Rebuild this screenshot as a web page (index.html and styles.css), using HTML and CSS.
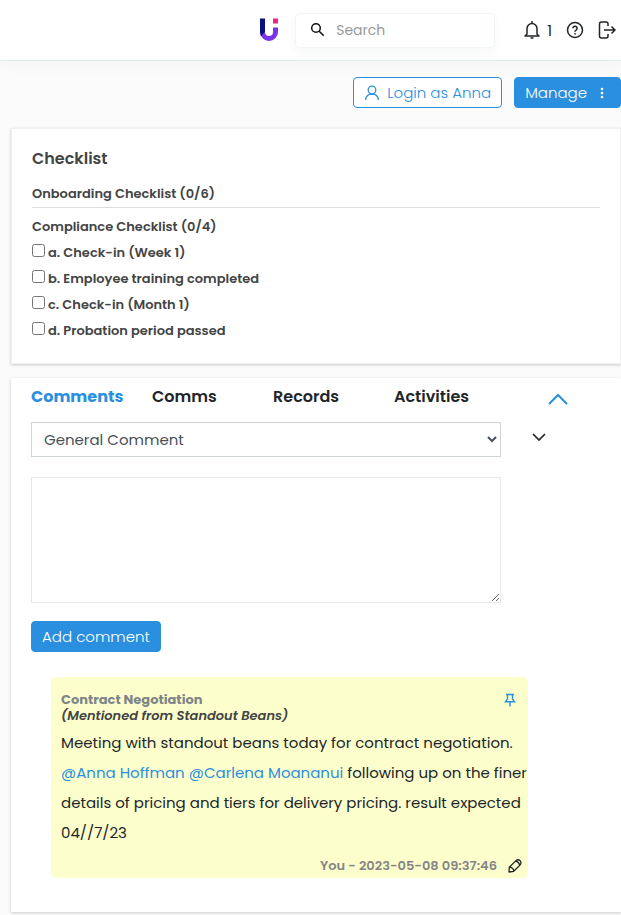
FILE: index.html
```html
<!DOCTYPE html>
<html lang="en">
<head>
  <meta charset="UTF-8">
  <meta name="viewport" content="width=device-width, initial-scale=1">
  <title>Employee</title>
  <link rel="stylesheet" href="styles.css">
</head>
<body>

  <header class="topbar">
    <a class="logo" href="#" aria-label="Home">
      <svg width="20" height="24" viewBox="0 0 20 24">
        <path d="M3.500 14a6.500 6.500 0 0 0 13 0V9.500" fill="none" stroke="#7a33e6" stroke-width="5"/>
        <path d="M1 .5h5v13L2 18.500L1 14z" fill="#0b0f80"/>
        <rect x="14" y=".5" width="5" height="5" fill="#ec2484"/>
      </svg>
    </a>
    <form class="search">
      <svg width="16" height="16" viewBox="0 0 16 16" fill="none" stroke="#111" stroke-width="1.500">
        <circle cx="6" cy="6" r="4.300"/>
        <path d="M9.200 9.200L13.700 13.700"/>
      </svg>
      <input type="search" placeholder="Search" aria-label="Search">
    </form>
    <nav class="top-icons">
      <a class="bell" href="#" aria-label="Notifications">
        <svg width="18" height="20" viewBox="0 0 18 20" fill="none" stroke="currentColor" stroke-width="1.500">
          <path d="M9 1v2M4 14V8.500a5 5 0 0 1 10 0V14l2 2H2z" stroke-linejoin="round"/>
          <path d="M7.500 18h3"/>
        </svg>
        <span>1</span>
      </a>
      <a href="#" aria-label="Help">
        <svg width="18" height="18" viewBox="0 0 18 18" fill="none" stroke="currentColor" stroke-width="1.500">
          <circle cx="9" cy="9" r="7.500"/>
          <path d="M6.900 7.300a2.100 2.100 0 1 1 3.200 1.800c-.8.5-1.100.8-1.100 1.600M9 12v1.500"/>
        </svg>
      </a>
      <a href="#" aria-label="Log out">
        <svg width="18" height="18" viewBox="0 0 18 18" fill="none" stroke="currentColor" stroke-width="1.500">
          <path d="M10 5V3q0-2-2-2H3.500q-2 0-2 2v12q0 2 2 2H8q2 0 2-2v-2M6 9h11M13.500 5.500L17 9l-3.500 3.500"/>
        </svg>
      </a>
    </nav>
  </header>

  <div class="actions">
    <button class="btn btn-outline" type="button">
      <svg width="16" height="16" viewBox="0 0 16 16" fill="none" stroke="currentColor" stroke-width="1.300">
        <circle cx="8" cy="5" r="3.800"/>
        <path d="M1.500 15c.5-3.700 3-6 6.500-6s6 2.300 6.500 6"/>
      </svg>
      Login as Anna
    </button>
    <button class="btn btn-manage" type="button">
      Manage
      <svg width="4" height="12" viewBox="0 0 4 12" fill="currentColor">
        <circle cx="2" cy="2" r="1.300"/><circle cx="2" cy="6" r="1.300"/><circle cx="2" cy="10" r="1.300"/>
      </svg>
    </button>
  </div>

  <main>
    <section class="card checklist">
      <h2>Checklist</h2>
      <h3 class="group">Onboarding Checklist (0/6)</h3>
      <h3>Compliance Checklist (0/4)</h3>
      <ul>
        <li><input type="checkbox" id="check-a"><label for="check-a">a. Check-in (Week 1)</label></li>
        <li><input type="checkbox" id="check-b"><label for="check-b">b. Employee training completed</label></li>
        <li><input type="checkbox" id="check-c"><label for="check-c">c. Check-in (Month 1)</label></li>
        <li><input type="checkbox" id="check-d"><label for="check-d">d. Probation period passed</label></li>
      </ul>
    </section>

    <section class="card comments">
      <nav class="tabs">
        <a class="active" href="#">Comments</a>
        <a href="#">Comms</a>
        <a href="#">Records</a>
        <a href="#">Activities</a>
        <button class="icon-btn collapse" type="button" aria-label="Collapse">
          <svg width="20" height="12" viewBox="0 0 20 12" fill="none" stroke="currentColor" stroke-width="2">
            <path d="M1 11l9-9 9 9"/>
          </svg>
        </button>
      </nav>

      <form class="comment-form">
        <select aria-label="Comment type">
          <option>General Comment</option>
        </select>
        <button class="icon-btn expand" type="button" aria-label="More options">
          <svg width="14" height="8" viewBox="0 0 14 8" fill="none" stroke="currentColor" stroke-width="1.700">
            <path d="M1 1l6 6 6-6"/>
          </svg>
        </button>
        <textarea aria-label="Comment"></textarea>
        <button class="btn btn-add" type="button">Add comment</button>
      </form>

      <article class="note">
        <div class="note-head">
          <div>
            <h4>Contract Negotiation</h4>
            <em>(Mentioned from Standout Beans)</em>
          </div>
          <button class="icon-btn pin" type="button" aria-label="Pin">
            <svg width="12" height="14" viewBox="0 0 12 14" fill="none" stroke="currentColor" stroke-width="1.400">
              <path d="M2 1.500h8M3.500 1.500v4.500L1.500 8.700h9l-2-2.700v-4.500M6 9v4.500"/>
            </svg>
          </button>
        </div>
        <p>Meeting with standout beans today for contract negotiation. <a href="#">@Anna Hoffman</a> <a href="#">@Carlena Moananui</a> following up on the finer details of pricing and tiers for delivery pricing. result expected 04//7/23</p>
        <footer>
          <span>You - 2023-05-08 09:37:46</span>
          <button class="icon-btn edit" type="button" aria-label="Edit">
            <svg width="14" height="14" viewBox="0 0 14 14" fill="none" stroke="currentColor" stroke-width="1.300" stroke-linejoin="round">
              <path d="M1 13l.3-4.700L8 1.600q2.200-1.600 3.900-.2t.6 4.200L5.700 12.300zM1.800 8.200q3.400.5 4 4M7.800 2.200q3 .8 4 4"/>
            </svg>
          </button>
        </footer>
      </article>
    </section>
  </main>

</body>
</html>
```
FILE: styles.css
```css
* {
  box-sizing: border-box;
}
body {
  margin: 0;
  background: #fbfbfb;
  color: #212529;
  font-family: Poppins, Inter, "Liberation Sans", sans-serif;
  font-size: 15px;
}
h2, h3, h4, p, ul {
  margin: 0;
  padding: 0;
}
a {
  color: inherit;
  text-decoration: none;
}
svg {
  display: block;
  flex: none;
}
button, input, select, textarea {
  font: inherit;
}

/* top bar */
.topbar {
  display: flex;
  align-items: center;
  justify-content: flex-end;
  height: 61px;
  padding-right: 5px;
  background: #fff;
  border-bottom: 1px solid #e2ecec;
  box-shadow: 0 2px 16px rgba(0, 60, 60, 0.04);
}
.logo {
  margin-right: 16px;
}
.search {
  display: flex;
  align-items: center;
  gap: 10px;
  width: 200px;
  height: 35px;
  padding: 0 14px;
  border: 1px solid #f0f5f5;
  border-radius: 4px;
  box-shadow: 0 4px 10px rgba(0, 60, 60, 0.04);
}
.search input {
  width: 100%;
  min-width: 0;
  padding: 0;
  border: 0;
  outline: 0;
  background: none;
  font-size: 14px;
}
.search input::placeholder {
  color: #999;
}
.top-icons {
  display: flex;
  align-items: center;
  gap: 14px;
  margin-left: 28px;
}
.bell {
  display: flex;
  align-items: center;
  gap: 6px;
}

/* buttons */
.actions {
  display: flex;
  justify-content: flex-end;
  gap: 12px;
  padding: 16px 0 20px;
}
.btn {
  display: flex;
  align-items: center;
  height: 31px;
  padding: 0 10px;
  border: 1px solid #2b8fe0;
  border-radius: 4px;
  background: #2b8fe0;
  color: #fff;
  font-size: 15px;
  font-weight: 300;
  cursor: pointer;
}
.btn-outline {
  gap: 7px;
  background: #fff;
  color: #2b8fe0;
}
.btn-manage {
  gap: 13px;
  padding-right: 16px;
}
.icon-btn {
  padding: 0;
  border: 0;
  background: none;
  color: inherit;
  cursor: pointer;
}

/* cards */
main {
  display: grid;
  gap: 14px;
  padding: 0 0 3px 11px;
}
.card {
  padding: 20px;
  background: #fff;
  box-shadow: 0 1px 3px rgba(0, 0, 0, 0.2);
}
.checklist {
  border: 1px solid #f0f0f0;
  padding-bottom: 19px;
  color: #444;
}
.checklist h2 {
  font-size: 16px;
  font-weight: 600;
  line-height: 20px;
  margin-bottom: 12px;
}
.checklist h3 {
  font-size: 13px;
  font-weight: 600;
  line-height: 26px;
}
.checklist .group {
  border-bottom: 1px solid #ddd;
  margin-bottom: 6px;
}
.checklist ul {
  list-style: none;
}
.checklist li {
  display: flex;
  align-items: center;
  gap: 3px;
  height: 26px;
  font-size: 13px;
  font-weight: 600;
}
.checklist input {
  width: 13px;
  height: 13px;
  margin: 0 0 5px;
}

/* comments */
.comments {
  padding-top: 9px;
  padding-bottom: 34px;
}
.tabs {
  display: grid;
  grid-template-columns: repeat(4, 121px) 1fr;
  align-items: center;
  margin-bottom: 15px;
  font-size: 16px;
  font-weight: 600;
  line-height: 20px;
}
.tabs .active {
  color: #2b8fe0;
  font-weight: 700;
}
.collapse {
  justify-self: center;
  padding-top: 4px;
  color: #2b8fe0;
}
.comment-form {
  display: grid;
  grid-template-columns: 1fr 69px;
  column-gap: 31px;
  align-items: center;
}
.comment-form select {
  height: 35px;
  padding: 0 8px;
  border: 1px solid #ced4da;
  border-radius: 0;
  background: #fff;
  color: #495057;
}
.expand {
  justify-self: start;
  padding-bottom: 5px;
}
.comment-form textarea {
  grid-column: 1;
  height: 126px;
  margin: 20px 0 18px;
  border: 1px solid #e8e8e8;
  outline: 0;
}
.btn-add {
  grid-column: 1;
  justify-self: start;
}
.note {
  margin: 25px 73px 0 20px;
  padding: 15px 0 1px 10px;
  border-radius: 5px;
  background: #fcffcc;
}
.note-head {
  display: flex;
  justify-content: space-between;
  align-items: flex-start;
  padding-right: 12px;
  font-size: 13px;
  line-height: 16px;
}
.note h4 {
  color: #808488;
  font-size: 13px;
  font-weight: 700;
}
.note em {
  color: #444;
  font-weight: 600;
}
.pin {
  margin-top: 1px;
  color: #2b8fe0;
}
.note p {
  margin-top: 4px;
  line-height: 30px;
}
.note p a {
  color: #2b8fe0;
}
.note footer {
  display: flex;
  justify-content: flex-end;
  align-items: center;
  gap: 11px;
  margin-top: 7px;
  padding-right: 6px;
  font-size: 13px;
  font-weight: 600;
  line-height: 22px;
}
.note footer span {
  color: #858585;
}
```
